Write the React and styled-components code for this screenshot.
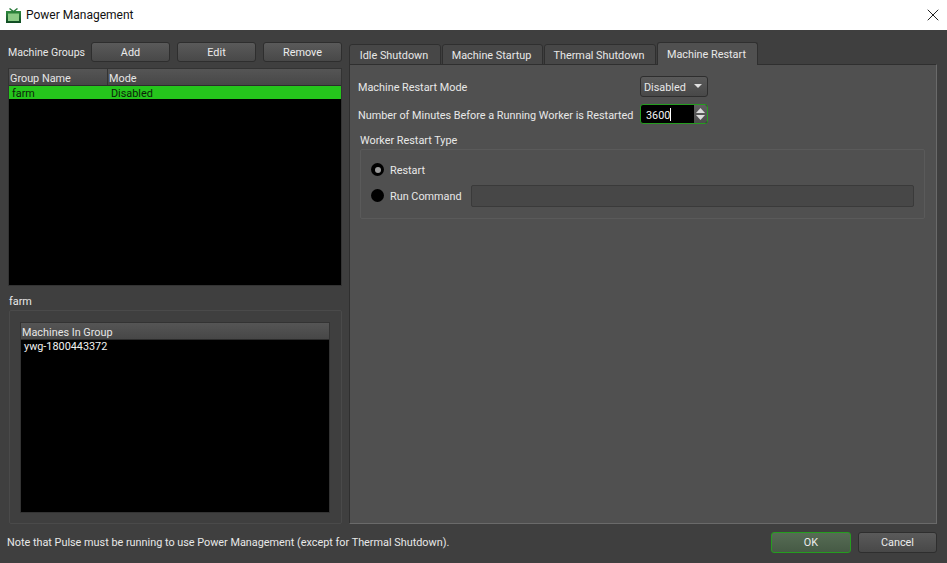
import React from 'react'
import styled, { createGlobalStyle } from 'styled-components'
import { X } from 'lucide-react'

const Global = createGlobalStyle`
  html, body {
    margin: 0;
    padding: 0;
    background: #3f3f3f;
  }
  * {
    box-sizing: border-box;
  }
`

const Window = styled.div`
  width: 947px;
  height: 563px;
  display: flex;
  flex-direction: column;
  overflow: hidden;
  background: #3f3f3f;
  color: #e8e8e8;
  font-family: Roboto, "Noto Sans", sans-serif;
  font-size: 10.85px;
`

const TitleBar = styled.div`
  height: 30px;
  flex: none;
  display: flex;
  align-items: center;
  padding-left: 6px;
  background: #fff;
  color: #111;
  font-size: 12px;
`

const TitleText = styled.span`
  margin-left: 5px;
  flex: 1;
`

const CloseBox = styled.div`
  width: 28px;
  height: 30px;
  display: flex;
  align-items: center;
  justify-content: center;
  color: #222;
`

const Body = styled.div`
  flex: 1;
  display: flex;
  gap: 7px;
  padding: 12px 10px 0 8px;
  min-height: 0;
`

const LeftColumn = styled.div`
  width: 334px;
  flex: none;
  display: flex;
  flex-direction: column;
`

const GroupToolbar = styled.div`
  display: flex;
  align-items: center;
  height: 20px;
`

const ToolbarLabel = styled.span`
  width: 83px;
  white-space: nowrap;
  font-size: 10.6px;
`

const Button = styled.button`
  width: ${p => p.$width}px;
  height: ${p => p.$height || 20}px;
  margin-right: ${p => p.$gap || 0}px;
  padding: 0;
  border: 1px solid ${p => (p.$default ? '#259d1f' : '#2e2e2e')};
  border-radius: 3px;
  background: ${p => (p.$default
    ? 'linear-gradient(#566c54, #465a45)'
    : 'linear-gradient(#5a5a5a, #484848)')};
  color: #ececec;
  font-family: inherit;
  font-size: 10.85px;
`

const Table = styled.div`
  background: #000;
  border: 1px solid #333;
  display: flex;
  flex-direction: column;
`

const GroupTable = styled(Table)`
  margin-top: 6px;
  height: 218px;
`

const HeaderRow = styled.div`
  height: 17px;
  flex: none;
  display: flex;
  padding-top: 2px;
  background: linear-gradient(#555, #474747);
  border-bottom: 1px solid #2c2c2c;
  color: #e6e6e6;
  line-height: 15px;
`

const HeaderCell = styled.div`
  width: ${p => p.$width || 'auto'};
  flex: ${p => (p.$width ? 'none' : 1)};
  margin-top: ${p => (p.$width ? '-2px' : 0)};
  padding-top: ${p => (p.$width ? '2px' : 0)};
  padding-left: 1px;
  border-right: ${p => (p.$width ? '1px solid #333' : 'none')};
`

const SelectedRow = styled.div`
  height: 13px;
  display: flex;
  background: #25c51c;
  color: #0c1f0a;
  line-height: 15px;
`

const Cell = styled.div`
  width: ${p => p.$width || 'auto'};
  padding-left: 3px;
`

const SectionLabel = styled.div`
  margin: ${p => p.$margin};
  padding-top: 1px;
  height: 16px;
  line-height: 16px;
`

const GroupFrame = styled.div`
  margin-left: 1px;
  height: 214px;
  padding: 11px 11px 10px 10px;
  border: 1px solid #4a4a4a;
  border-radius: 2px;
`

const MachineTable = styled(Table)`
  height: 191px;
`

const MachineRow = styled.div`
  padding-left: 3px;
  line-height: 14px;
  color: #f0f0f0;
`

const TabColumn = styled.div`
  flex: 1;
  display: flex;
  flex-direction: column;
  height: 482px;
`

const TabBar = styled.div`
  height: 23px;
  flex: none;
  display: flex;
  align-items: flex-end;
  margin-bottom: -1px;
  position: relative;
  z-index: 1;
`

const Tab = styled.div`
  width: ${p => p.$width}px;
  height: ${p => (p.$active ? 23 : 21)}px;
  margin-right: ${p => (p.$active ? 0 : 1)}px;
  padding: ${p => (p.$active ? 0 : 2)}px 2px 0 0;
  display: flex;
  align-items: center;
  justify-content: center;
  border: 1px solid #2f2f2f;
  border-bottom: ${p => (p.$active ? 'none' : '1px solid #2f2f2f')};
  border-radius: 3px 3px 0 0;
  background: ${p => (p.$active ? '#505050' : '#474747')};
`

const TabPane = styled.div`
  flex: 1;
  padding: 11px 11px 0 8px;
  background: #505050;
  border: 1px solid #2f2f2f;
  border-color: #2f2f2f #6a6a6a #6a6a6a #2f2f2f;
`

const FormRow = styled.div`
  display: flex;
  align-items: center;
  height: 20px;
  margin-bottom: ${p => p.$gap || 0}px;
`

const FormLabel = styled.span`
  width: 282px;
  flex: none;
  padding-top: 2px;
  white-space: nowrap;
`

const Combo = styled.div`
  width: 68px;
  height: 21px;
  display: flex;
  align-items: center;
  justify-content: space-between;
  padding: 2px 5px 0 3px;
  border: 1px solid #2e2e2e;
  border-radius: 3px;
  background: linear-gradient(#5a5a5a, #484848);
`

const ComboArrow = styled.svg`
  width: 8px;
  height: 4px;
  margin-top: -2px;
  fill: #e0e0e0;
`

const Spin = styled.div`
  width: 68px;
  height: 20px;
  display: flex;
  border: 1px solid #259d1f;
  border-radius: 3px;
  background: #000;
  overflow: hidden;
`

const SpinInput = styled.div`
  flex: 1;
  padding: 1px 0 0 5px;
  line-height: 19px;
  color: #f4f4f4;
`

const Caret = styled.span`
  display: inline-block;
  width: 1px;
  height: 13px;
  background: #fff;
  vertical-align: -2px;
`

const SpinButtons = styled.div`
  width: 13px;
  background: linear-gradient(#606060, #4c4c4c);
  display: flex;
  align-items: center;
  justify-content: center;
`

const FrameLegend = styled.div`
  margin: 8px 0 0 2px;
  padding-top: 1px;
  height: 16px;
  line-height: 16px;
`

const TypeFrame = styled.div`
  height: 70px;
  margin: 1px 0 0 2px;
  padding: 9px 10px 0;
  border: 1px solid #5a5a5a;
  border-radius: 2px;
`

const RadioRow = styled.div`
  display: flex;
  align-items: center;
  height: 21px;
  margin-bottom: ${p => p.$gap || 0}px;
`

const Radio = styled.span`
  width: 13px;
  height: 13px;
  flex: none;
  display: flex;
  align-items: center;
  justify-content: center;
  border-radius: 50%;
  background: #000;
  margin-right: 6px;
  &::after {
    content: '';
    width: 6px;
    height: 6px;
    border-radius: 50%;
    background: ${p => (p.$checked ? '#9a9a9a' : 'transparent')};
  }
`

const RadioLabel = styled.span`
  width: 81px;
  flex: none;
  padding-top: 2px;
  white-space: nowrap;
`

const CommandInput = styled.div`
  flex: 1;
  height: 22px;
  background: #474747;
  border: 1px solid #3a3a3a;
  border-radius: 2px;
`

const Footer = styled.div`
  height: 39px;
  flex: none;
  display: flex;
  align-items: center;
  padding: 0 10px 2px 7px;
`

const Note = styled.div`
  flex: 1;
`

export default function App() {
  return (
    <Window>
      <Global />
      <TitleBar>
        <svg width="15" height="15" viewBox="0 0 15 15">
          <defs>
            <linearGradient id="tvBody" x1="0" y1="0" x2="0" y2="1">
              <stop offset="0" stopColor="#2f8a3e" />
              <stop offset="1" stopColor="#0f4a22" />
            </linearGradient>
          </defs>
          <rect x="0" y="3" width="15" height="12" fill="url(#tvBody)" />
          <rect x="2" y="5.5" width="11" height="7.5" fill="#8ccb86" />
          <path d="M3.5 0.5 L7.5 3.5 L11.5 0.5" stroke="#2a7a3a" strokeWidth="1.4" fill="none" />
        </svg>
        <TitleText>Power Management</TitleText>
        <CloseBox><X size={20} strokeWidth={1.2} /></CloseBox>
      </TitleBar>
      <Body>
        <LeftColumn>
          <GroupToolbar>
            <ToolbarLabel>Machine Groups</ToolbarLabel>
            <Button $width={79} $gap={7}>Add</Button>
            <Button $width={79} $gap={7}>Edit</Button>
            <Button $width={79}>Remove</Button>
          </GroupToolbar>
          <GroupTable>
            <HeaderRow>
              <HeaderCell $width="99px">Group Name</HeaderCell>
              <HeaderCell>Mode</HeaderCell>
            </HeaderRow>
            <SelectedRow>
              <Cell $width="99px">farm</Cell>
              <Cell>Disabled</Cell>
            </SelectedRow>
          </GroupTable>
          <SectionLabel $margin="7px 0 1px 1px">farm</SectionLabel>
          <GroupFrame>
            <MachineTable>
              <HeaderRow><HeaderCell>Machines In Group</HeaderCell></HeaderRow>
              <MachineRow>ywg-1800443372</MachineRow>
            </MachineTable>
          </GroupFrame>
        </LeftColumn>
        <TabColumn>
          <TabBar>
            <Tab $width={92}>Idle Shutdown</Tab>
            <Tab $width={101}>Machine Startup</Tab>
            <Tab $width={112}>Thermal Shutdown</Tab>
            <Tab $width={101} $active>Machine Restart</Tab>
          </TabBar>
          <TabPane>
            <FormRow $gap={8}>
              <FormLabel>Machine Restart Mode</FormLabel>
              <Combo>
                Disabled
                <ComboArrow viewBox="0 0 8 4"><path d="M0 0 H8 L4 4 Z" /></ComboArrow>
              </Combo>
            </FormRow>
            <FormRow>
              <FormLabel>Number of Minutes Before a Running Worker is Restarted</FormLabel>
              <Spin>
                <SpinInput>3600<Caret /></SpinInput>
                <SpinButtons>
                  <svg width="9" height="16" viewBox="0 0 9 16" fill="#dcdcdc">
                    <path d="M0 7 L4.5 2 L9 7 Z" />
                    <path d="M0 9 H9 L4.5 14 Z" />
                  </svg>
                </SpinButtons>
              </Spin>
            </FormRow>
            <FrameLegend>Worker Restart Type</FrameLegend>
            <TypeFrame>
              <RadioRow $gap={5}><Radio $checked /><RadioLabel>Restart</RadioLabel></RadioRow>
              <RadioRow><Radio /><RadioLabel>Run Command</RadioLabel><CommandInput /></RadioRow>
            </TypeFrame>
          </TabPane>
        </TabColumn>
      </Body>
      <Footer>
        <Note>Note that Pulse must be running to use Power Management (except for Thermal Shutdown).</Note>
        <Button $width={80} $height={21} $gap={7} $default>OK</Button>
        <Button $width={79} $height={21}>Cancel</Button>
      </Footer>
    </Window>
  )
}
